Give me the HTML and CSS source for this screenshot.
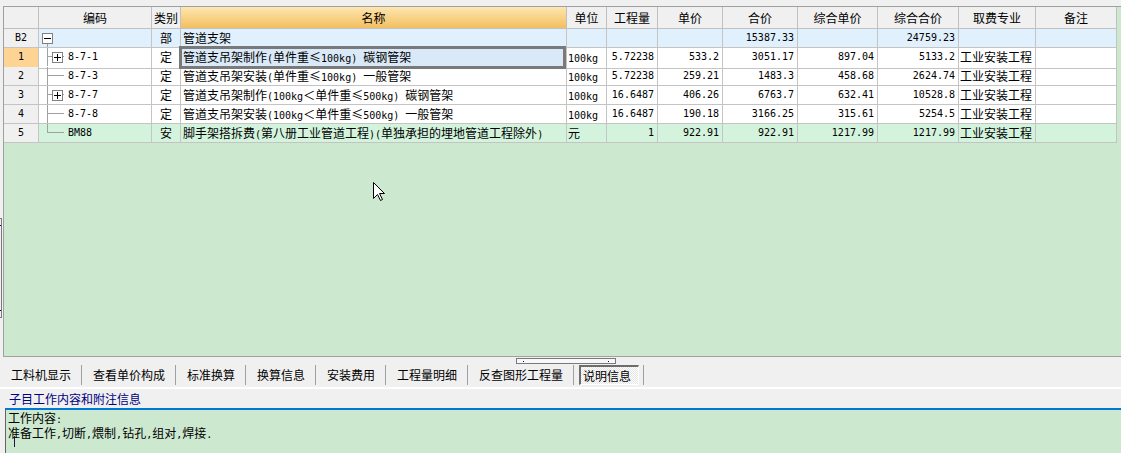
FILE: index.html
```html
<!DOCTYPE html>
<html lang="zh-CN">
<head>
<meta charset="utf-8">
<title>说明信息</title>
<link rel="stylesheet" href="styles.css">
</head>
<body>
<div class="main">
  <div class="vsplit"><div class="vhandle"></div></div>
  <div class="grid-wrap">
    <div class="row head">
      <div class="c"></div>
      <div class="c">编码</div>
      <div class="c">类别</div>
      <div class="c hl">名称</div>
      <div class="c">单位</div>
      <div class="c">工程量</div>
      <div class="c">单价</div>
      <div class="c">合价</div>
      <div class="c">综合单价</div>
      <div class="c">综合合价</div>
      <div class="c">取费专业</div>
      <div class="c">备注</div>
    </div>
    <div class="row b2">
      <div class="c num">B2</div>
      <div class="c code"><div class="node root"><span class="box"></span></div></div>
      <div class="c ctr">部</div>
      <div class="c txt">管道支架</div>
      <div class="c"></div>
      <div class="c"></div>
      <div class="c"></div>
      <div class="c n">15387.33</div>
      <div class="c"></div>
      <div class="c n">24759.23</div>
      <div class="c"></div>
      <div class="c"></div>
    </div>
    <div class="row">
      <div class="c num on">1</div>
      <div class="c code"><div class="node child"><span class="box plus"></span>8-7-1</div></div>
      <div class="c ctr">定</div>
      <div class="c txt sel">管道支吊架制作<span class="a">(</span>单件重≤<span class="a">100kg) </span>碳钢管架</div>
      <div class="c u"><span class="a">100kg</span></div>
      <div class="c n">5.72238</div>
      <div class="c n">533.2</div>
      <div class="c n">3051.17</div>
      <div class="c n">897.04</div>
      <div class="c n">5133.2</div>
      <div class="c fee">工业安装工程</div>
      <div class="c"></div>
    </div>
    <div class="row">
      <div class="c num">2</div>
      <div class="c code"><div class="node child"><span class="nobox"></span>8-7-3</div></div>
      <div class="c ctr">定</div>
      <div class="c txt">管道支吊架安装<span class="a">(</span>单件重≤<span class="a">100kg) </span>一般管架</div>
      <div class="c u"><span class="a">100kg</span></div>
      <div class="c n">5.72238</div>
      <div class="c n">259.21</div>
      <div class="c n">1483.3</div>
      <div class="c n">458.68</div>
      <div class="c n">2624.74</div>
      <div class="c fee">工业安装工程</div>
      <div class="c"></div>
    </div>
    <div class="row">
      <div class="c num">3</div>
      <div class="c code"><div class="node child"><span class="box plus"></span>8-7-7</div></div>
      <div class="c ctr">定</div>
      <div class="c txt">管道支吊架制作<span class="a">(100kg</span>＜单件重≤<span class="a">500kg) </span>碳钢管架</div>
      <div class="c u"><span class="a">100kg</span></div>
      <div class="c n">16.6487</div>
      <div class="c n">406.26</div>
      <div class="c n">6763.7</div>
      <div class="c n">632.41</div>
      <div class="c n">10528.8</div>
      <div class="c fee">工业安装工程</div>
      <div class="c"></div>
    </div>
    <div class="row">
      <div class="c num">4</div>
      <div class="c code"><div class="node child"><span class="nobox"></span>8-7-8</div></div>
      <div class="c ctr">定</div>
      <div class="c txt">管道支吊架安装<span class="a">(100kg</span>＜单件重≤<span class="a">500kg) </span>一般管架</div>
      <div class="c u"><span class="a">100kg</span></div>
      <div class="c n">16.6487</div>
      <div class="c n">190.18</div>
      <div class="c n">3166.25</div>
      <div class="c n">315.61</div>
      <div class="c n">5254.5</div>
      <div class="c fee">工业安装工程</div>
      <div class="c"></div>
    </div>
    <div class="row g">
      <div class="c num">5</div>
      <div class="c code"><div class="node child last"><span class="nobox"></span>BM88</div></div>
      <div class="c ctr">安</div>
      <div class="c txt">脚手架搭拆费<span class="a">(</span>第八册工业管道工程<span class="a">)(</span>单独承担的埋地管道工程除外<span class="a">)</span></div>
      <div class="c u">元</div>
      <div class="c n">1</div>
      <div class="c n">922.91</div>
      <div class="c n">922.91</div>
      <div class="c n">1217.99</div>
      <div class="c n">1217.99</div>
      <div class="c fee">工业安装工程</div>
      <div class="c"></div>
    </div>
  </div>
</div>
<div class="hsplit"><div class="hhandle"></div></div>
<div class="tabs">
  <div class="tab">工料机显示</div><div class="sep"></div>
  <div class="tab">查看单价构成</div><div class="sep"></div>
  <div class="tab">标准换算</div><div class="sep"></div>
  <div class="tab">换算信息</div><div class="sep"></div>
  <div class="tab">安装费用</div><div class="sep"></div>
  <div class="tab">工程量明细</div><div class="sep"></div>
  <div class="tab">反查图形工程量</div><div class="sep"></div>
  <div class="tab active">说明信息</div><div class="sep"></div>
</div>
<div class="label">子目工作内容和附注信息</div>
<div class="memo">
  <div>工作内容<span class="a">:</span></div>
  <div>准备工作<span class="a">,</span>切断<span class="a">,</span>煨制<span class="a">,</span>钻孔<span class="a">,</span>组对<span class="a">,</span>焊接<span class="a">.</span></div>
  <span class="caret"></span>
</div>
<svg class="pointer" width="13" height="20" viewBox="0 0 13 20"><path d="M0.5 0.5 L0.5 16.5 L4.5 12.5 L7.5 18.5 L9.5 17.5 L6.5 11.5 L11.5 11.5 Z" fill="#fff" stroke="#000" stroke-width="1"/></svg>
</body>
</html>
```
FILE: styles.css
```css
* { box-sizing: border-box; }
html, body { margin: 0; padding: 0; }
body {
  background: #f0f0f0;
  font-family: "Noto Sans CJK SC", sans-serif;
  font-size: 12px;
  color: #000;
  width: 1121px;
  height: 453px;
  overflow: hidden;
  position: relative;
  padding-top: 6px;
}
.a, .n, .num, .node {
  font-family: "DejaVu Sans Mono", monospace;
  font-size: 10px;
}
.main { display: flex; height: 351px; }
.vsplit { width: 3px; flex: none; padding-top: 212px; }
.vhandle {
  width: 2px;
  height: 100px;
  border: 1px solid #7a7a7a;
  border-left: none;
  position: relative;
}
.vhandle::before, .vhandle::after {
  content: "";
  position: absolute;
  left: 0;
  width: 1px;
  height: 1px;
  background: #000080;
}
.vhandle::before { top: 6px; }
.vhandle::after { bottom: 6px; }
.grid-wrap {
  flex: 1;
  margin-right: -30px;
  border: 1px solid #a0a0a0;
  background: #cce8cf;
}
.row {
  display: grid;
  grid-template-columns: 35px 113px 29px 386px 40px 51px 65px 75px 80px 81px 77px 81px;
  width: 1113px;
  height: 19px;
  background: #fff;
}
.c {
  border-right: 1px solid #c4c4c4;
  border-bottom: 1px solid #c4c4c4;
  line-height: 18px;
  white-space: nowrap;
  overflow: hidden;
}
.head { height: 22px; background: #f0f0f0; }
.head .c { line-height: 21px; text-align: center; border-color: #c0c0c0; }
.head .hl { background: linear-gradient(#fde6b0, #f3bf60); }
.b2 { background: #e0f0fd; }
.g { background: #d3f3dd; }
.num { background: #f0f0f0; text-align: center; }
.num.on { background: #fdd493; }
.ctr { text-align: center; }
.txt { padding-left: 2px; }
.u { padding-left: 1px; }
.fee { padding-left: 1px; }
.n { text-align: right; padding-right: 3px; }
.sel { position: relative; overflow: visible; background: #d9e9f8; }
.sel::after {
  content: "";
  position: absolute;
  left: -2px;
  top: -2px;
  right: 0;
  bottom: -1px;
  border: 3px solid #7a7a7a;
}
.node {
  display: flex;
  align-items: center;
  height: 18px;
}
.node.root {
  padding-left: 3px;
  background: linear-gradient(#a0a0a0, #a0a0a0) no-repeat 8px 12px / 1px 6px;
}
.node.child {
  padding-left: 13px;
  background:
    linear-gradient(#a0a0a0, #a0a0a0) no-repeat 8px 0 / 1px 100%,
    linear-gradient(#a0a0a0, #a0a0a0) no-repeat 8px 8px / 17px 1px;
}
.node.child.last {
  background:
    linear-gradient(#a0a0a0, #a0a0a0) no-repeat 8px 0 / 1px 9px,
    linear-gradient(#a0a0a0, #a0a0a0) no-repeat 8px 8px / 17px 1px;
}
.box {
  width: 11px;
  height: 11px;
  flex: none;
  margin-right: 5px;
  border: 1px solid #808080;
  background: #fff;
  position: relative;
}
.box::before {
  content: "";
  position: absolute;
  left: 1px;
  top: 4px;
  width: 7px;
  height: 1px;
  background: #000;
}
.box.plus::after {
  content: "";
  position: absolute;
  left: 4px;
  top: 1px;
  width: 1px;
  height: 7px;
  background: #000;
}
.nobox { width: 11px; flex: none; margin-right: 5px; }
.hsplit { height: 8px; padding-top: 1px; }
.hhandle {
  margin-left: 516px;
  width: 100px;
  height: 6px;
  border: 1px solid #7a7a7a;
  background: #f8f8f8;
  position: relative;
}
.hhandle::before, .hhandle::after {
  content: "";
  position: absolute;
  top: 2px;
  width: 1px;
  height: 1px;
  background: #000080;
}
.hhandle::before { left: 6px; }
.hhandle::after { right: 6px; }
.tabs {
  display: flex;
  align-items: flex-start;
  height: 24px;
  border-bottom: 2px solid #fff;
}
.tab {
  padding: 0 10px 0 11px;
  height: 20px;
  line-height: 20px;
}
.tab.active {
  margin: 0 4px 0 5px;
  padding: 0 7px 0 2px;
  line-height: 17px;
  border-top: 2px solid #6d6d6d;
  border-left: 2px solid #6d6d6d;
  border-right: 1px solid #fff;
  border-bottom: 1px solid #fff;
  background: repeating-conic-gradient(#ffffff 0 25%, #e4e4e4 0 50%) 0 0 / 2px 2px;
}
.sep { width: 1px; height: 20px; background: #a0a0a0; flex: none; }
.label {
  height: 19px;
  line-height: 19px;
  padding-left: 9px;
  color: #000080;
}
.memo {
  margin-left: 5px;
  height: 60px;
  border-top: 2px solid #0078d7;
  border-left: 1px solid #646464;
  background: #cce8cf;
  padding: 1px 0 0 2px;
  line-height: 13px;
  position: relative;
}
.caret {
  position: absolute;
  left: 8px;
  top: 26px;
  width: 1px;
  height: 11px;
  background: #1a1a3a;
}
.pointer { position: absolute; left: 373px; top: 182px; }
```
